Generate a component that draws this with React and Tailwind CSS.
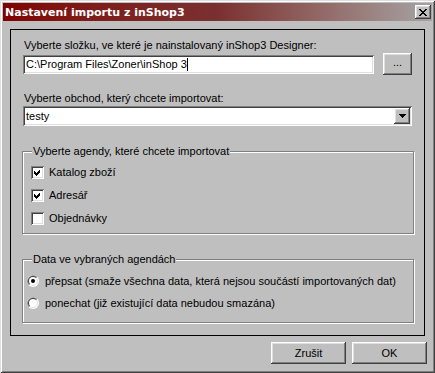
import React from 'react'

const raised =
  'shadow-[inset_-1px_-1px_0_#404040,inset_1px_1px_0_#fff,inset_-2px_-2px_0_#808080,inset_2px_2px_0_#dfdfdf]'
const sunken =
  'shadow-[inset_1px_1px_0_#808080,inset_-1px_-1px_0_#fff,inset_2px_2px_0_#404040,inset_-2px_-2px_0_#dfdfdf]'

function Check({ checked }) {
  return (
    <span className={`relative block w-[13px] h-[13px] bg-white ${sunken}`}>
      {checked && (
        <svg width="13" height="13" className="absolute inset-0" shapeRendering="crispEdges">
          <polygon points="3,5 5,7 9,3 9,6 5,10 3,8" fill="#000" />
        </svg>
      )}
    </span>
  )
}

function Radio({ checked }) {
  return (
    <svg width="12" height="12" viewBox="0 0 12 12" className="block">
      <circle cx="6" cy="6" r="6" fill="#fff" />
      <path d="M6,6 L1.76,10.24 A6,6 0 0 1 10.24,1.76 Z" fill="#808080" />
      <circle cx="6" cy="6" r="5" fill="#dfdfdf" />
      <path d="M6,6 L2.46,9.54 A5,5 0 0 1 9.54,2.46 Z" fill="#404040" />
      <circle cx="6" cy="6" r="4" fill="#fff" />
      {checked && <circle cx="6" cy="6" r="2" fill="#000" />}
    </svg>
  )
}

function Group({ title, className, children }) {
  return (
    <div
      className={`relative -ml-[1px] w-[392px] border border-[#808080] shadow-[inset_1px_1px_0_#fff,1px_1px_0_#fff] ${className}`}
    >
      <span className="absolute -top-[7px] left-[9px] px-[1px] bg-[#bfbfbf] leading-[13px]">{title}</span>
      {children}
    </div>
  )
}

export default function App() {
  return (
    <div
      className="w-[435px] h-[373px] p-[3px] bg-[#bfbfbf] text-[11px] leading-[13px] text-black shadow-[inset_1px_1px_0_#dfdfdf,inset_-1px_-1px_0_#404040,inset_2px_2px_0_#fff,inset_-2px_-2px_0_#808080]"
      style={{ fontFamily: '"Liberation Sans", Arial, sans-serif' }}
    >
      {/* title bar */}
      <div className="h-[18px] flex items-center justify-between pl-[2px] bg-gradient-to-r from-[#800000] via-[#7a3030] to-[#a4a4a4]">
        <span className="text-white font-bold text-[11px] font-['DejaVu_Sans',sans-serif]">Nastavení importu z inShop3</span>
        <button className={`mr-[1px] w-[16px] h-[14px] bg-[#bfbfbf] flex items-center justify-center ${raised}`}>
          <svg width="8" height="7" viewBox="0 0 8 7" shapeRendering="crispEdges">
            <path d="M0,0h2v1h-2zM6,0h2v1h-2zM1,1h2v1h-2zM5,1h2v1h-2zM2,2h4v1h-4zM3,3h2v1h-2zM2,4h4v1h-4zM1,5h2v1h-2zM5,5h2v1h-2zM0,6h2v1h-2zM6,6h2v1h-2z" fill="#000" />
          </svg>
        </button>
      </div>

      {/* main panel */}
      <div className="mt-[8px] ml-[7px] w-[415px] h-[307px] border border-black px-[12px] pt-[9px]">
        <div className="ml-[1px]">Vyberte složku, ve které je nainstalovaný inShop3 Designer:</div>
        <div className="mt-[1px] flex items-center">
          <div className={`w-[353px] h-[19px] bg-white flex items-center pl-[3px] ${sunken}`}>
            <span>C:\Program Files\Zoner\inShop 3</span>
            <span className="w-px h-[13px] bg-black" />
          </div>
          <button className={`ml-[9px] w-[29px] h-[22px] bg-[#bfbfbf] pb-[3px] ${raised}`}>...</button>
        </div>

        <div className="mt-[17px] ml-[1px]">Vyberte obchod, který chcete importovat:</div>
        <div className={`mt-[1px] h-[20px] bg-white flex items-center justify-between pl-[3px] pr-[2px] ${sunken}`}>
          <span>testy</span>
          <span className={`w-[16px] h-[16px] bg-[#bfbfbf] flex items-center justify-center ${raised}`}>
            <svg width="7" height="4" viewBox="0 0 7 4" shapeRendering="crispEdges">
              <path d="M0,0h7v1h-7zM1,1h5v1h-5zM2,2h3v1h-3zM3,3h1v1h-1z" fill="#000" />
            </svg>
          </span>
        </div>

        <Group title="Vyberte agendy, které chcete importovat" className="mt-[25px] h-[83px] pt-[14px] pl-[8px]">
          <div className="flex flex-col gap-[10px]">
            {[
              ['Katalog zboží', true],
              ['Adresář', true],
              ['Objednávky', false],
            ].map(([label, checked]) => (
              <div key={label} className="flex items-center gap-[5px] h-[13px]">
                <Check checked={checked} />
                <span>{label}</span>
              </div>
            ))}
          </div>
        </Group>

        <Group title="Data ve vybraných agendách" className="mt-[25px] h-[64px] pt-[15px] pl-[4px]">
          <div className="flex flex-col gap-[10px]">
            <div className="flex items-center gap-[6px] h-[12px]">
              <Radio checked />
              <span>přepsat (smaže všechna data, která nejsou součástí importovaných dat)</span>
            </div>
            <div className="flex items-center gap-[6px] h-[12px]">
              <Radio />
              <span>ponechat (již existující data nebudou smazána)</span>
            </div>
          </div>
        </Group>
      </div>

      {/* buttons */}
      <div className="mt-[6px] mr-[5px] flex justify-end gap-[6px]">
        <button className={`w-[75px] h-[22px] bg-[#bfbfbf] ${raised}`}>Zrušit</button>
        <button className={`w-[75px] h-[22px] bg-[#bfbfbf] ${raised}`}>OK</button>
      </div>
    </div>
  )
}
